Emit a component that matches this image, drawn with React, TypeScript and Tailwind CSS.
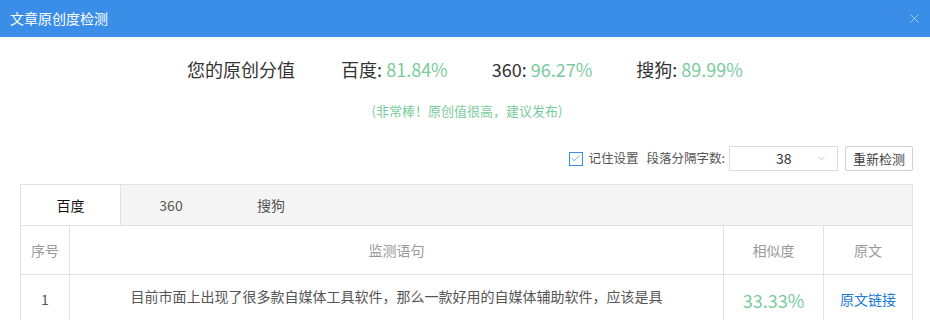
import { X, ChevronDown, Check } from 'lucide-react';

/** Score item in the top summary row. */
function Score({ label, value }: { label: string; value: string }) {
  return (
    <span className="text-[#333]">
      {label}: <span className="text-[#7acb9c]">{value}</span>
    </span>
  );
}

const tabs = ['百度', '360', '搜狗'];

export default function App() {
  return (
    <div
      className="h-[320px] w-[930px] overflow-hidden bg-white"
      style={{ fontFamily: '"Microsoft YaHei", "Noto Sans CJK SC", "Noto Sans", sans-serif' }}
    >
      {/* Title bar */}
      <div className="flex h-[37px] items-center justify-between bg-[#3a8ee8] pl-[10px] pr-[8px] text-white">
        <span className="text-[14px]">文章原创度检测</span>
        <X size={15} strokeWidth={1} className="text-[#d8e8fb]" />
      </div>

      {/* Scores */}
      <div className="mt-[18px] flex h-[28px] items-center justify-center gap-[44px] text-[18px]">
        <span className="mr-[2px] text-[#333]">您的原创分值</span>
        <Score label="百度" value="81.84%" />
        <Score label="360" value="96.27%" />
        <Score label="搜狗" value="89.99%" />
      </div>

      <div className="mt-[18px] flex h-[20px] items-center justify-center pl-[4px] text-[13px] text-[#7acb9c]">
        (非常棒！原创值很高，建议发布)
      </div>

      {/* Controls */}
      <div className="mr-[17px] mt-[25px] flex h-[25px] items-center justify-end text-[12.5px] text-[#555]">
        <span className="flex h-[14px] w-[14px] items-center justify-center border border-[#3a8ee8]">
          <Check size={11} strokeWidth={1.5} className="text-[#3a8ee8]" />
        </span>
        <span className="ml-[6px]">记住设置</span>
        <span className="ml-[8px]">段落分隔字数:</span>
        <div className="ml-[4px] flex h-[25px] w-[109px] items-center border border-[#dcdcdc] pl-[46px] pr-[10px] text-[14px] text-[#333]">
          <span className="flex-1">38</span>
          <ChevronDown size={11} strokeWidth={1.2} className="text-[#999]" />
        </div>
        <button className="ml-[7px] h-[25px] w-[68px] rounded-[2px] border border-[#d0d0d0] bg-white text-[13px] text-[#444]">
          重新检测
        </button>
      </div>

      {/* Result table */}
      <div className="ml-[20px] mr-[17px] mt-[13px] border border-[#e2e2e2]">
        <div className="flex h-[40px] bg-[#f5f5f5] text-[14px]">
          {tabs.map((t, i) => (
            <div
              key={t}
              className={
                i === 0
                  ? 'flex w-[100px] items-center justify-center border-r border-[#e2e2e2] bg-white text-[#111]'
                  : 'flex w-[100px] items-center justify-center text-[#555]'
              }
            >
              {t}
            </div>
          ))}
        </div>
        <div className="grid grid-cols-[48px_654px_100px_1fr] border-t border-[#e2e2e2] text-[14px]">
          <div className="flex h-[48px] items-center justify-center text-[#999]">序号</div>
          <div className="flex items-center justify-center border-l border-[#e2e2e2] text-[#999]">监测语句</div>
          <div className="flex items-center justify-center border-l border-[#e2e2e2] text-[#999]">相似度</div>
          <div className="flex items-center justify-center border-l border-[#e2e2e2] text-[#999]">原文</div>

          <div className="flex h-[60px] items-start justify-center border-t border-[#e2e2e2] pt-[14px] text-[#555]">1</div>
          <div className="flex items-start justify-center border-l border-t border-[#e2e2e2] pt-[11px] text-[#555]">
            目前市面上出现了很多款自媒体工具软件，那么一款好用的自媒体辅助软件，应该是具
          </div>
          <div className="flex items-start justify-center border-l border-t border-[#e2e2e2] pt-[12px] text-[18px] text-[#7acb9c]">
            33.33%
          </div>
          <div className="flex items-start justify-center border-l border-t border-[#e2e2e2] pt-[14px] text-[14px] text-[#1a7ad8]">
            原文链接
          </div>
        </div>
      </div>
    </div>
  );
}
